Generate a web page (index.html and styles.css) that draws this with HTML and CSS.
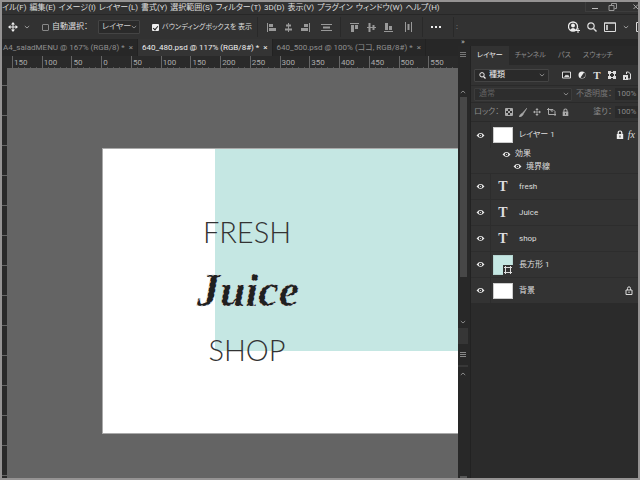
FILE: index.html
```html
<!DOCTYPE html>
<html lang="ja">
<head>
<meta charset="utf-8">
<title>640_480.psd</title>
<link rel="stylesheet" href="styles.css">
</head>
<body>
<svg class="defs" aria-hidden="true">
  <symbol id="eye" viewBox="0 0 10 8"><path d="M0.5 4Q5-1.6 9.5 4Q5 9.6 0.5 4Z" fill="#f0f0f0"/><circle cx="5" cy="4" r="2" fill="#303030"/><circle cx="5" cy="4" r=".7" fill="#ddd"/></symbol>
  <symbol id="down" viewBox="0 0 6 6"><path d="M.8 2L3 4L5.200 2" fill="none" stroke="currentColor"/></symbol>
  <symbol id="up" viewBox="0 0 6 6"><path d="M.8 4L3 2L5.200 4" fill="none" stroke="currentColor"/></symbol>
  <symbol id="move" viewBox="0 0 10 10"><path d="M5 1V9M1 5H9" stroke="currentColor"/><path d="M5 0L7 2.500H3ZM5 10L3 7.500H7ZM0 5L2.500 3V7ZM10 5L7.500 7V3Z" fill="currentColor"/></symbol>
  <symbol id="lock" viewBox="0 0 8 10"><path d="M2.200 5V3Q2.200 1 4 1T5.800 3V5" fill="none" stroke="currentColor" stroke-width="1.200"/><path d="M.8 4H7.200V9H.8Z" fill="currentColor"/><path d="M4 5.500V7.500" stroke="#333"/></symbol>
</svg>
<header class="top">
  <nav class="menu">
    <a href="#">イル(F)</a><a href="#">編集(E)</a><a href="#">イメージ(I)</a><a href="#">レイヤー(L)</a><a href="#">書式(Y)</a><a href="#">選択範囲(S)</a><a href="#">フィルター(T)</a><a href="#">3D(D)</a><a href="#">表示(V)</a><a href="#">プラグイン</a><a href="#">ウィンドウ(W)</a><a href="#">ヘルプ(H)</a>
    <div class="window-controls">
      <button aria-label="最小化"><svg width="8" height="8" viewBox="0 0 8 8"><path d="M1 5.500H7" stroke="#bbb"/></svg></button>
      <button aria-label="元に戻す"><svg width="10" height="8" viewBox="0 0 10 8"><path d="M1 2.500H6V7.500H1ZM3.500 2V.5H8.500V5.500H6.500" fill="none" stroke="#999"/></svg></button>
      <button class="close" aria-label="閉じる"><svg width="5" height="8" viewBox="0 0 5 8"><path d="M.5 1.500L5 6M.5 6L5 1.500" stroke="#aaa"/></svg></button>
    </div>
  </nav>
  <div class="options">
    <button class="tool" aria-label="移動ツール"><svg width="10" height="10"><use href="#move"/></svg><svg class="dim" width="6" height="6"><use href="#down"/></svg></button>
    <label class="check"><input type="checkbox">自動選択：</label>
    <span class="select target"><select aria-label="選択対象"><option>レイヤー</option></select><svg width="6" height="6"><use href="#down"/></svg></span>
    <label class="check bounds"><input type="checkbox" checked>バウンディングボックスを 表示</label>
    <div class="align first">
      <button aria-label="左揃え"><svg width="9" height="9"><path d="M.5 0V9" stroke="currentColor"/><path d="M2 1H6V4H2ZM2 5H9V8H2Z" fill="currentColor"/></svg></button>
      <button aria-label="水平方向中央揃え"><svg width="9" height="9"><path d="M4.500 0V9" stroke="currentColor"/><path d="M2 1.500H7V3.500H2ZM1 5.500H8V7.500H1Z" fill="currentColor"/></svg></button>
      <button aria-label="右揃え"><svg width="9" height="9"><path d="M8.500 0V9" stroke="currentColor"/><path d="M3 1H7V4H3ZM0 5H7V8H0Z" fill="currentColor"/></svg></button>
      <button class="distribute" aria-label="垂直分布"><svg width="11" height="9"><path d="M0 1.500H11M0 7.500H11" stroke="currentColor"/><path d="M2 3.500H9V5.500H2Z" fill="currentColor"/></svg></button>
    </div>
    <div class="align">
      <button aria-label="上揃え"><svg width="9" height="9"><path d="M0 .5H9" stroke="currentColor"/><path d="M1 2H4V9H1ZM5 2H8V6H5Z" fill="currentColor"/></svg></button>
      <button aria-label="垂直方向中央揃え"><svg width="9" height="9"><path d="M0 4.500H9" stroke="currentColor"/><path d="M1.500 0H3.500V9H1.500ZM5.500 2H7.500V7H5.500Z" fill="currentColor"/></svg></button>
      <button aria-label="下揃え"><svg width="9" height="9"><path d="M0 8.500H9" stroke="currentColor"/><path d="M1 0H4V7H1ZM5 3H8V7H5Z" fill="currentColor"/></svg></button>
      <button class="distribute" aria-label="水平分布"><svg width="9" height="10"><path d="M1.500 0V10M7.500 0V10" stroke="currentColor"/><path d="M3.500 2H5.500V8H3.500Z" fill="currentColor"/></svg></button>
    </div>
    <button class="more" aria-label="その他"><svg width="12" height="4"><path d="M1 1H3V3H1ZM5 1H7V3H5ZM9 1H11V3H9Z" fill="#eee"/></svg></button>
    <div class="mode">:</div>
    <div class="account">
      <button aria-label="アカウント"><svg width="12" height="12" viewBox="0 0 12 12"><circle cx="5" cy="5.500" r="4.500" fill="none" stroke="#eee" stroke-width="1.300"/><circle cx="5" cy="4.500" r="2" fill="#eee"/><path d="M2 9Q5 5 8 9Q5 11 2 9Z" fill="#eee"/><path d="M10 7V12M7.500 9.500H12" stroke="#eee"/></svg></button>
      <button aria-label="検索"><svg width="10" height="10" viewBox="0 0 10 10"><circle cx="4" cy="4" r="3.200" fill="none" stroke="#ddd" stroke-width="1.200"/><path d="M6.500 6.500L9.500 9.500" stroke="#ddd" stroke-width="1.400"/></svg></button>
      <button aria-label="ワークスペース"><svg width="12" height="10"><path d="M.5 1H11.500V9.500H.5Z" fill="none" stroke="#ddd"/><path d="M2 3H4V8H2Z" fill="#bbb"/><path d="M0 1H12" stroke="#ddd"/></svg></button>
      <svg class="dim" width="6" height="6"><use href="#down"/></svg>
      <button aria-label="共有"><svg width="2" height="10"><path d="M2 .5H.5V9.500H2" fill="none" stroke="#ddd"/></svg></button>
    </div>
  </div>
</header>
<main class="work">
  <section class="document">
    <nav class="tabs">
      <a href="#" class="tab">A4_saladMENU @ 167% (RGB/8) *<b>×</b></a>
      <a href="#" class="tab active">640_480.psd @ 117% (RGB/8#) *<b>×</b></a>
      <a href="#" class="tab">640_500.psd @ 100% (ココ, RGB/8#) *<b>×</b></a>
    </nav>
    <div class="ruler"><span>150</span><span>100</span><span>50</span><span>0</span><span>50</span><span>100</span><span>150</span><span>200</span><span>250</span><span>300</span><span>350</span><span>400</span><span>450</span><span>500</span><span>550</span></div>
    <div class="view">
      <div class="ruler-left"></div>
      <div class="canvas">
        <div class="artboard">
          <div class="shape"></div>
          <div class="lettering">
            <span>FRESH</span>
            <svg class="script" width="112" height="58" viewBox="0 0 112 58"><text x="6" y="44">Juice</text></svg>
            <span>SHOP</span>
          </div>
        </div>
      </div>
    </div>
  </section>
  <aside class="dock">
    <div class="collapse">»</div>
    <div class="dock-body">
      <div class="strip">
        <svg class="burger" width="6" height="5"><path d="M0 .5H6M0 2.500H6M0 4.500H6" stroke="#777"/></svg>
        <svg width="6" height="6"><use href="#up"/></svg>
        <div class="thumb"></div>
        <svg class="strip-down" width="6" height="6"><use href="#down"/></svg>
        <div class="block"></div>
        <svg class="mini" width="6" height="5"><path d="M0 .5H6M0 2.500H6M0 4.500H6" stroke="#888"/></svg>
        <div class="rule"></div>
        <svg class="strip-up" width="6" height="6"><use href="#up"/></svg>
        <div class="strip-end"></div>
      </div>
      <section class="panel">
        <nav class="panel-tabs"><a href="#" class="on">レイヤー</a><a href="#">チャンネル</a><a href="#">パス</a><a href="#">スウォッチ</a></nav>
        <div class="row filter">
          <span class="select kind"><svg width="7" height="7" viewBox="0 0 7 7"><circle cx="3" cy="2.800" r="2.200" fill="none" stroke="#eee"/><path d="M4.500 4.500L6.500 6.500" stroke="#eee" stroke-width="1.200"/></svg><select aria-label="種類"><option>種類</option></select><svg width="6" height="6"><use href="#down"/></svg></span>
          <div class="filters">
            <button aria-label="ピクセル"><svg width="9" height="8"><path d="M.5 1H8.500V7H.5Z" fill="#222" stroke="#ddd"/><path d="M2 6L4 3.500L5 4.500L6 3.500L7.500 6Z" fill="#ddd"/></svg></button>
            <button aria-label="調整"><svg width="8" height="8"><circle cx="4" cy="4" r="3.500" fill="#eee"/><path d="M6 1.500A3 3 0 0 1 2.500 6.500Z" fill="#333"/></svg></button>
            <button class="serif" aria-label="文字">T</button>
            <button aria-label="シェイプ"><svg width="8" height="8" viewBox="0 0 8 8"><path d="M1.500 1.500H6.500V6.500H1.500Z" fill="none" stroke="#ddd"/><path d="M0 0H3V3H0ZM5 0H8V3H5ZM0 5H3V8H0ZM5 5H8V8H5Z" fill="#ddd"/></svg></button>
            <button aria-label="スマートオブジェクト"><svg width="8" height="9"><path d="M3.500 3V1H5.500L7.500 3V8H5" fill="none" stroke="#ddd"/><path d="M0 4H5V9H0Z" fill="#ddd"/><path d="M2 6H3V8H2Z" fill="#333"/></svg></button>
          </div>
        </div>
        <div class="row blend">
          <span class="select mix"><select aria-label="描画モード" disabled><option>通常</option></select><svg width="6" height="6"><use href="#down"/></svg></span>
          <label>不透明度：<input value="100%" disabled></label>
        </div>
        <div class="row locks">
          <span>ロック：</span>
          <div class="lock-icons">
            <svg width="8" height="8"><path d="M.5.5H7.500V7.500H.5Z" fill="none" stroke="currentColor"/><path d="M1 1H3V3H1ZM5 1H7V3H5ZM3 3H5V5H3ZM1 5H3V7H1ZM5 5H7V7H5Z" fill="currentColor"/></svg>
            <svg width="8" height="9"><path d="M8 0L3 5.500L4 6.500ZM3 5.500Q.8 6 0 9Q3.500 8.500 4 6.500Z" fill="currentColor" stroke="currentColor" stroke-width=".5"/></svg>
            <svg width="8" height="8"><use href="#move"/></svg>
            <svg width="9" height="8"><path d="M0 1.500H6L8 3.500V8M1.500 0V6.500H9M4 1.500V3H6" fill="none" stroke="currentColor"/></svg>
            <svg width="7" height="9"><use href="#lock"/></svg>
          </div>
          <label>塗り：<input value="100%" disabled></label>
        </div>
        <ul class="layers">
          <li class="layer first"><button aria-label="表示"><svg width="9" height="7"><use href="#eye"/></svg></button><i class="pic"></i><span>レイヤー 1</span><svg class="badge" width="8" height="10"><use href="#lock"/></svg><em>fx</em></li>
          <li class="effect"><button aria-label="表示"><svg width="9" height="7"><use href="#eye"/></svg></button>効果</li>
          <li class="effect inner"><button aria-label="表示"><svg width="9" height="7"><use href="#eye"/></svg></button>境界線</li>
          <li class="layer"><button aria-label="表示"><svg width="9" height="7"><use href="#eye"/></svg></button><i class="type">T</i><span>fresh</span></li>
          <li class="layer"><button aria-label="表示"><svg width="9" height="7"><use href="#eye"/></svg></button><i class="type">T</i><span>Juice</span></li>
          <li class="layer"><button aria-label="表示"><svg width="9" height="7"><use href="#eye"/></svg></button><i class="type">T</i><span>shop</span></li>
          <li class="layer"><button aria-label="表示"><svg width="9" height="7"><use href="#eye"/></svg></button><i class="pic rect"><svg width="10" height="10"><path d="M0 0H10V10H0Z" fill="#333"/><path d="M2.500 1V9M7.500 1V9M1 2.500H9M1 7.500H9" stroke="#ddd"/></svg></i><span>長方形 1</span></li>
          <li class="layer"><button aria-label="表示"><svg width="9" height="7"><use href="#eye"/></svg></button><i class="pic"></i><span>背景</span><svg class="badge end" width="8" height="9"><path d="M2.500 4V2.500Q2.500 .8 4 .8T5.500 2.500V4M1 4H7V8.500H1ZM4 5.500V7" fill="none" stroke="#ddd"/></svg></li>
        </ul>
      </section>
    </div>
  </aside>
</main>
</body>
</html>
```
FILE: styles.css
```css
* { box-sizing: border-box; }
body {
  margin: 0;
  height: 100vh;
  display: flex;
  flex-direction: column;
  border: 2px solid #959393;
  background: #2b2b2b;
  color: #dedede;
  font: 8px/12px Roboto, "Noto Sans CJK JP", sans-serif;
  font-feature-settings: "palt";
  overflow: hidden;
}
a { color: inherit; text-decoration: none; }
button, select, input { font: inherit; font-feature-settings: inherit; color: inherit; border: 0; padding: 0; margin: 0; background: none; }
button { display: flex; align-items: center; justify-content: center; }
svg { display: block; flex: none; }
.defs { display: none; }
.dim { color: #999; }

.top { background: #323232; white-space: nowrap; }
.menu { display: flex; height: 13px; gap: 3px; line-height: 11px; border-bottom: 1px solid #272727; }
.window-controls { display: flex; margin-left: auto; align-items: center; height: 10px; border: 1px solid #3d3d3d; border-top: 0; border-right: 0; }
.window-controls button { width: 18px; height: 9px; }
.window-controls .close { width: 16px; justify-content: flex-end; }

.options { display: flex; align-items: center; height: 24px; }
.tool { gap: 6px; width: 40px; color: #eee; padding-left: 6px; justify-content: flex-start; }
.check { display: flex; align-items: center; gap: 3px; width: 56px; }
.check input { appearance: none; width: 7px; height: 7px; border: 1px solid #888; border-radius: 1px; }
.check input:checked { border: 0; background: #eee; }
.check input:checked::after { content: ""; display: block; width: 2px; height: 4px; margin: 1px 2px; border: solid #222; border-width: 0 1px 1px 0; rotate: 40deg; }
.bounds { width: 104px; margin-left: 12px; flex: none; font-size: 7px; }
.select { display: flex; align-items: center; gap: 3px; background: #2a2a2a; border: 1px solid #444; color: #ccc; border-radius: 1px; }
.select select { appearance: none; flex: 1; min-width: 0; height: 12px; }
.select svg { color: #888; }
.target { width: 42px; height: 14px; padding: 0 2px 0 3px; gap: 0; }
.align { display: flex; align-items: center; gap: 8px; height: 20px; padding: 0 9px; border-left: 1px solid #292929; color: #999; }
.align.first { margin-left: 1px; padding-right: 8px; }
.distribute { margin-left: 3px; }
.more { width: 32px; height: 20px; padding-right: 4px; border: solid #292929; border-width: 0 1px 0 1px; }
.mode { margin-left: 2px; color: #999; }
.account { display: flex; align-items: center; gap: 7px; margin-left: auto; }

.work { flex: 1; display: flex; min-height: 0; }
.document { flex: 1; min-width: 0; display: flex; flex-direction: column; }
.tabs { display: flex; height: 17px; background: #272727; color: #8f8f8f; white-space: nowrap; }
.tab { display: flex; align-items: center; padding: 0 4px; border-right: 1px solid #222; }
.tab:first-child { padding-left: 1px; }
.tab b { font-weight: 400; margin-left: 4px; }
.tab.active { background: #343434; color: #eee; }
.ruler { display: grid; grid-template-columns: repeat(15, 1fr); height: 12px; padding-left: 10px; background: #2a2a2a; color: #aaa; line-height: 13px; overflow: hidden; }
.ruler span { border-left: 1px solid #666; padding-left: 1px; background: repeating-linear-gradient(90deg, transparent 0 5px, #555 5px 6px) 0 100% / 100% 2px no-repeat; }
.view { flex: 1; display: flex; min-height: 0; }
.ruler-left { width: 5px; background: repeating-linear-gradient(#666 0 1px, transparent 1px 30px) 0 17px, repeating-linear-gradient(90deg, #292929 0 3px, transparent 3px), repeating-linear-gradient(#4c4c4c 0 1px, #292929 1px 6px); }
.canvas { flex: 1; min-width: 0; background: #646464; padding: 80px 0 44px 95px; }
.artboard { display: grid; height: 100%; background: #fff; border: 1px solid #aaa; border-right: 0; }
.shape { grid-area: 1 / 1; margin: 0 0 82px 112px; background: #c5e7e3; }
.lettering { grid-area: 1 / 1; justify-self: start; align-self: start; display: flex; flex-direction: column; align-items: center; padding: 64px 0 0 88px; color: #333; font: 300 29px/38px Lato, sans-serif; }
.script { margin: 11px 0; }
.script text { font: italic 700 46px "Liberation Serif", serif; fill: #202020; stroke: #ddd; stroke-width: 1px; stroke-dasharray: 2 3; }

.dock { width: 180px; display: flex; flex-direction: column; }
.collapse { height: 7px; line-height: 5px; padding-left: 3px; background: #272727; color: #bbb; }
.dock-body { flex: 1; display: flex; min-height: 0; }
.strip { width: 13px; display: flex; flex-direction: column; align-items: center; padding-right: 2px; background: #282828; color: #888; border-right: 1px solid #222; }
.burger { margin: 6px 0 32px; }
.thumb { width: 7px; height: 180px; margin-top: 2px; background: #474747; }
.strip-down { margin: 42px 0 3px; }
.block { width: 100%; height: 16px; background: #363636; }
.mini { margin: 8px 0; }
.rule { width: 100%; height: 2px; background: #383838; }
.strip-up { margin-top: 4px; }
.strip-end { width: 7px; height: 2px; margin-top: auto; background: #555; }
.panel { flex: 1; min-width: 0; white-space: nowrap; }
.panel-tabs { display: flex; height: 19px; background: #292929; color: #8c8c8c; font-size: 7px; line-height: 18px; }
.panel-tabs a { padding: 0 6px; }
.panel-tabs .on { background: #323232; color: #eee; }
.row { display: flex; align-items: center; background: #323232; border-bottom: 1px solid #2a2a2a; padding-left: 3px; }
.filter { height: 21px; }
.kind { width: 75px; height: 13px; padding: 0 3px 0 4px; color: #eee; }
.filters { display: flex; align-items: center; gap: 7px; margin-left: 13px; color: #ddd; }
.serif { font: 700 11px/10px "Liberation Serif", serif; width: 8px; }
.blend { height: 17px; color: #777; }
.mix { width: 98px; height: 13px; padding: 0 2px 0 4px; color: #777; background: #2d2d2d; border-color: #3c3c3c; }
.row label { display: flex; align-items: center; gap: 3px; margin-left: auto; }
.row input { width: 23px; height: 12px; padding-left: 2px; background: #2a2a2a; color: #888; }
.locks { height: 19px; color: #8c8c8c; }
.lock-icons { display: flex; align-items: center; gap: 6px; margin-left: 6px; color: #aaa; }
.layers { list-style: none; margin: 0; padding: 0; background: #333; }
.layer { display: flex; align-items: center; height: 26px; border-top: 1px solid #2d2d2d; padding-right: 3px; }
.layer > button { width: 20px; height: 25px; border-right: 1px solid #2d2d2d; }
.layer span { margin-left: 6px; }
.pic { width: 20px; height: 16px; margin-left: 2px; background: #fff; border: 1px solid #ccc; }
.rect { display: flex; align-items: flex-end; justify-content: flex-end; height: 20px; background: #c5e7e3; border-color: #b5d5d1; }
.rect svg { margin: 0 -1px -1px 0; }
.type { width: 20px; margin-left: 2px; text-align: center; font: 700 14px/20px "Liberation Serif", serif; }
.badge { margin-left: auto; color: #eee; }
.badge.end { margin-right: 2px; }
.layer em { font: italic 10px/10px "Liberation Serif", serif; margin-left: 4px; }
.first { border-top: 0; }
.effect { display: flex; align-items: center; gap: 4px; height: 12px; padding-left: 31px; }
.inner { padding-left: 42px; height: 13px; }
```
